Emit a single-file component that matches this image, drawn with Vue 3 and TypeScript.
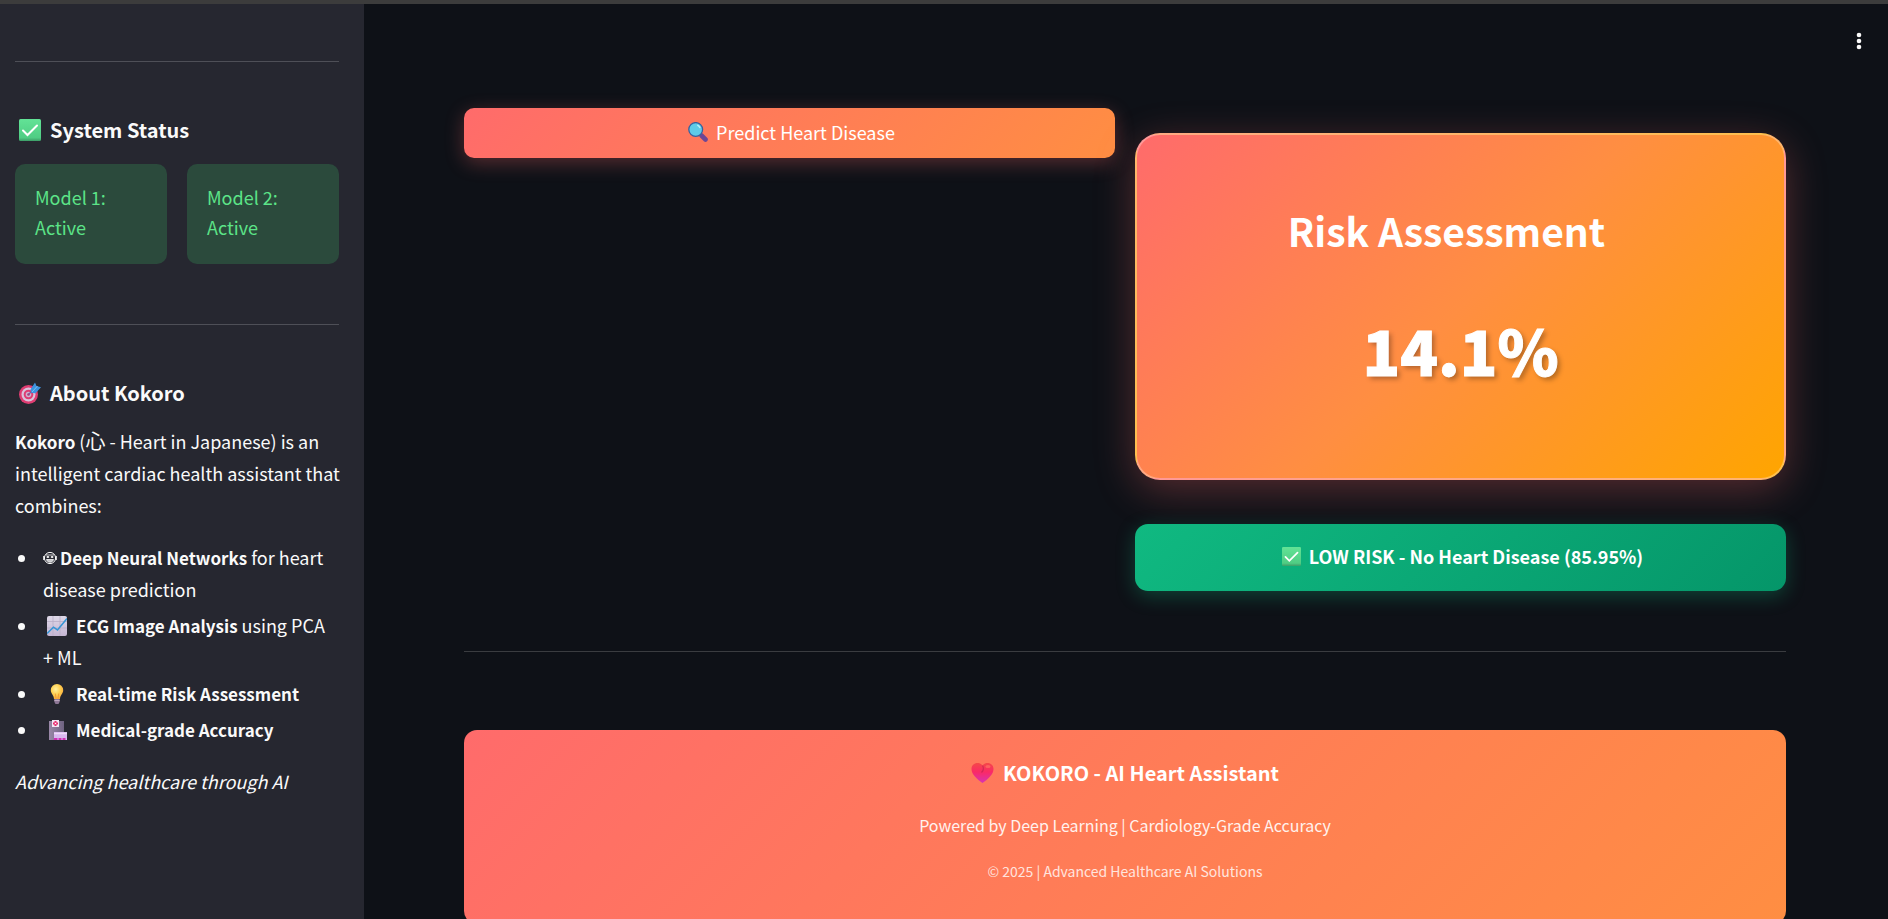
<script setup lang="ts">
const models: string[] = ['Model 1: Active', 'Model 2: Active']
const riskPercent = '14.1%'
const verdict = 'LOW RISK - No Heart Disease (85.95%)'
</script>

<template>
  <div class="shell">
    <svg class="defs" width="0" height="0" aria-hidden="true">
      <defs>
        <linearGradient id="gTick" x1="0" y1="0" x2="0" y2="1">
          <stop offset="0" stop-color="#62e396" /><stop offset=".85" stop-color="#50cd84" /><stop offset="1" stop-color="#3d9c67" />
        </linearGradient>
        <linearGradient id="gPaper" x1="0" y1="0" x2="0" y2="1">
          <stop offset="0" stop-color="#ded8e8" /><stop offset="1" stop-color="#c5b6d3" />
        </linearGradient>
        <radialGradient id="gBulb" cx=".4" cy=".35" r=".7">
          <stop offset="0" stop-color="#fff0a0" /><stop offset=".5" stop-color="#ffd152" /><stop offset="1" stop-color="#f7a83b" />
        </radialGradient>
        <linearGradient id="gHeart" x1="0" y1="0" x2="0" y2="1">
          <stop offset="0" stop-color="#f54848" /><stop offset=".45" stop-color="#fa2a66" /><stop offset="1" stop-color="#d832b4" />
        </linearGradient>
        <linearGradient id="gTower" x1="0" y1="0" x2="1" y2="0">
          <stop offset="0" stop-color="#9a88a8" /><stop offset="1" stop-color="#6e6280" />
        </linearGradient>
        <symbol id="tick" viewBox="0 0 22 22">
          <rect width="22" height="22" rx="1.5" fill="url(#gTick)" />
          <path d="M4 11.5 8.5 16 18 6.5" fill="none" stroke="#fff" stroke-width="2" stroke-linecap="round" />
        </symbol>
        <symbol id="target" viewBox="0 0 22 22">
          <circle cx="9.500" cy="12.500" r="9.500" fill="#df3d72" />
          <circle cx="9.500" cy="12.500" r="7" fill="#d9c4dc" />
          <circle cx="9.500" cy="12.500" r="4.800" fill="#df3d72" />
          <circle cx="9.500" cy="12.500" r="2.800" fill="#cdb4d2" />
          <circle cx="9.500" cy="12.500" r="1.300" fill="#b33a70" />
          <path d="M9.500 12.500 16 6" stroke="#7c5ba0" stroke-width="1.200" />
          <path d="m11.500 7.500 4.500-7 1.500 3.500 4.500 1.200-5.500 6-4-.2z" fill="#3b93e0" />
          <path d="M13 10 18.500 4" stroke="#7cc0f4" stroke-width="1" />
        </symbol>
        <symbol id="chart" viewBox="0 0 20 20">
          <rect width="20" height="20" rx="2" fill="url(#gPaper)" />
          <path d="M0 5.500h20M0 12h20M6 0v20M13 0v20" stroke="#b9aec8" stroke-width=".8" />
          <path d="m0 17.500 6.500-6.300 4 2.800L20 2.500" fill="none" stroke="#3595d5" stroke-width="1.600" />
        </symbol>
        <symbol id="bulb" viewBox="0 0 20 20">
          <path d="M10 0a6.200 6.200 0 0 0-6.200 6.200C3.800 9.500 7 11 7 15h6c0-4 3.200-5.500 3.200-8.800A6.200 6.200 0 0 0 10 0z" fill="url(#gBulb)" />
          <path d="M9 14.500 8.300 9.500M11 14.500l.7-5" stroke="#ee8b2c" stroke-width=".7" />
          <path d="M7.300 15h5.400v2.800L11.500 20h-3l-1.200-2.200z" fill="#8d7795" />
          <path d="M7.300 16.500h5.400" stroke="#c6b3cc" stroke-width=".8" />
        </symbol>
        <symbol id="hospital" viewBox="0 0 20 20">
          <rect x="2" y="1" width="15" height="19" fill="url(#gTower)" />
          <rect x="5" y="0" width="7" height="7" fill="#f3e5f4" />
          <path d="M8.500 1v5M6 3.500h5" stroke="#e8286c" stroke-width="2" />
          <circle cx="8.500" cy="3.500" r=".8" fill="#fff" />
          <rect x="7" y="12" width="13" height="8" fill="#d9b8f0" />
          <path d="M7 13.500h13" stroke="#eddbf8" stroke-width="1.500" />
          <path d="M7 19h3.500M11.500 19h3M15.500 19h3" stroke="#cf2fb4" stroke-width="2" />
        </symbol>
        <symbol id="face" viewBox="0 0 14 14">
          <circle cx="7" cy="7" r="5.600" fill="none" stroke="#fafafa" stroke-width="1" />
          <path d="M.8 5v4M13.200 5v4" stroke="#fafafa" stroke-width="1.200" />
          <path d="M3 4h8" stroke="#fafafa" stroke-width=".8" />
          <ellipse cx="4.900" cy="6" rx="1.400" ry="1" fill="#fafafa" />
          <ellipse cx="9.100" cy="6" rx="1.400" ry="1" fill="#fafafa" />
          <path d="M3.500 8.500h7c-.4 1.800-1.700 2.700-3.500 2.700s-3.100-.9-3.500-2.700z" fill="#c8c8cc" stroke="#fafafa" stroke-width=".8" />
        </symbol>
        <symbol id="lens" viewBox="0 0 20 20">
          <path d="m13.500 13.500 4 4" stroke="#6f4694" stroke-width="4.600" stroke-linecap="round" />
          <circle cx="7.700" cy="7.500" r="6.900" fill="#5fcbe8" stroke="#3a5f9c" stroke-width="1.300" />
          <path d="M9.800 3.300a4.500 4.500 0 0 1 2 2.200" stroke="#b9f0fa" stroke-width="1.500" fill="none" stroke-linecap="round" />
        </symbol>
        <symbol id="heart" viewBox="0 0 22 20">
          <path d="M11 2.500C9.500.5 7.500 0 6 0 2.500 0 0 2.500 0 6c0 5.500 5.500 10 11 14 5.500-4 11-8.500 11-14 0-3.500-2.500-6-6-6-1.500 0-3.500.5-5 2.500z" fill="url(#gHeart)" />
          <path d="M11 2.500c1.500 2.500 1 5-1 7" fill="none" stroke="#b81f50" stroke-width="1.200" opacity=".6" />
          <ellipse cx="16.500" cy="3.500" rx="2.600" ry="1.600" fill="#ff6a62" opacity=".8" />
        </symbol>
      </defs>
    </svg>

    <aside class="sidebar">
      <hr class="rule" />
      <h3 class="side-title"><svg class="ico"><use href="#tick" /></svg>System Status</h3>
      <div class="models">
        <div v-for="m in models" :key="m" class="model">{{ m }}</div>
      </div>
      <hr class="rule" />
      <h3 class="side-title"><svg class="ico"><use href="#target" /></svg>About Kokoro</h3>
      <p class="text"><strong>Kokoro</strong> (<span class="kanji">心</span> - Heart in Japanese) is an intelligent cardiac health assistant that combines:</p>
      <ul class="list">
        <li><svg class="mini face"><use href="#face" /></svg><strong>Deep Neural Networks</strong> for heart disease prediction</li>
        <li><svg class="mini"><use href="#chart" /></svg><strong>ECG Image Analysis</strong> using PCA + ML</li>
        <li><svg class="mini"><use href="#bulb" /></svg><strong>Real-time Risk Assessment</strong></li>
        <li><svg class="mini"><use href="#hospital" /></svg><strong>Medical-grade Accuracy</strong></li>
      </ul>
      <p class="text"><em>Advancing healthcare through AI</em></p>
    </aside>

    <main class="main">
      <button class="menu" type="button" aria-label="Main menu">
        <svg width="6" height="18" viewBox="0 0 6 18" fill="#fafafa"><circle cx="3" cy="3" r="2.300" /><circle cx="3" cy="9" r="2.300" /><circle cx="3" cy="15" r="2.300" /></svg>
      </button>
      <div class="columns">
        <button class="predict" type="button"><svg class="lens"><use href="#lens" /></svg>Predict Heart Disease</button>
        <div class="results">
          <section class="risk">
            <h2 class="risk-title">Risk Assessment</h2>
            <div class="risk-value">{{ riskPercent }}</div>
          </section>
          <div class="verdict"><svg class="mini-tick"><use href="#tick" /></svg>{{ verdict }}</div>
        </div>
      </div>
      <hr class="rule main-rule" />
      <footer class="footer">
        <h3 class="footer-title"><svg class="heart"><use href="#heart" /></svg>KOKORO - AI Heart Assistant</h3>
        <p class="powered">Powered by Deep Learning | Cardiology-Grade Accuracy</p>
        <p class="copy">© 2025 | Advanced Healthcare AI Solutions</p>
      </footer>
    </main>
  </div>
</template>

<style>
body {
  margin: 0;
  background: #0e1117;
}
</style>

<style scoped>
* {
  box-sizing: border-box;
}
.shell {
  display: flex;
  height: 100vh;
  overflow: hidden;
  border-top: 4px solid #3c3c3c;
  background: #0e1117;
  color: #fafafa;
  font-family: "Noto Sans CJK JP", "Noto Sans", sans-serif;
  font-size: 18px;
  line-height: 32px;
}
.defs {
  position: absolute;
}
h2, h3, p, ul {
  margin: 0;
}
.sidebar {
  flex: none;
  width: 364px;
  padding: 57px 25px 0 15px;
  background: #262730;
}
.rule {
  height: 1px;
  margin: 0;
  border: 0;
  background: #4e4f57;
}
.side-title {
  display: flex;
  align-items: center;
  gap: 9px;
  margin-top: 52px;
  padding-left: 4px;
  font-size: 20px;
  font-weight: 700;
  line-height: 32px;
}
.ico {
  width: 22px;
  height: 22px;
}
.models {
  display: grid;
  grid-template-columns: 1fr 1fr;
  gap: 20px;
  margin: 18px 0 60px;
}
.model {
  padding: 18px 40px 22px 20px;
  border-radius: 10px;
  background: #2b4a3c;
  color: #5ce488;
  line-height: 30px;
}
.text {
  margin: 16px -12px 0 0;
}
.sidebar strong {
  font-size: 17px;
  line-height: 20px;
}
.kanji {
  font-size: 20px;
  line-height: 20px;
}
.list {
  margin-top: 20px;
  padding: 0 8px 0 28px;
  list-style: none;
}
.list li {
  margin-bottom: 4px;
}
.list li::before {
  content: "";
  display: inline-block;
  width: 7px;
  height: 7px;
  margin: 0 18px 0 -25px;
  border-radius: 50%;
  background: #fafafa;
  vertical-align: 3px;
}
.list + .text {
  margin-top: 20px;
}
.mini {
  width: 20px;
  height: 20px;
  margin: 0 9px 0 4px;
  vertical-align: -3px;
}
.face {
  width: 14px;
  height: 14px;
  margin: 0 3px 0 0;
  vertical-align: 0;
}
.main {
  position: relative;
  flex: 1;
  min-width: 0;
  padding: 104px 102px 0 100px;
}
.menu {
  position: absolute;
  top: 28px;
  right: 26px;
  display: flex;
  padding: 0;
  border: 0;
  background: none;
}
.columns {
  display: grid;
  grid-template-columns: 1fr 1fr;
  align-items: start;
  gap: 20px;
}
.predict {
  display: flex;
  align-items: center;
  justify-content: center;
  gap: 8px;
  height: 50px;
  padding: 0 0 2px 4px;
  border: 0;
  border-radius: 10px;
  background: linear-gradient(135deg, #ff6b6b, #ff8e42);
  box-shadow: 0 5px 19px rgba(255, 107, 107, 0.3);
  color: #fff;
  font: inherit;
}
.lens {
  width: 20px;
  height: 20px;
}
.results {
  padding-top: 25px;
}
.risk {
  height: 347px;
  padding-top: 59px;
  border: 2px solid rgba(255, 255, 255, 0.3);
  border-radius: 25px;
  background: linear-gradient(135deg, #ff6b6b 0%, #ff8e42 50%, #ffa500 100%);
  box-shadow: 0 10px 40px rgba(255, 107, 107, 0.3);
  color: #fff;
  text-align: center;
}
.risk-title {
  padding-right: 28px;
  font-size: 39px;
  font-weight: 700;
  line-height: 72px;
}
.risk-value {
  margin-top: 33px;
  font-size: 62px;
  font-weight: 900;
  line-height: 100px;
  text-shadow: 3px 3px 5px rgba(0, 0, 0, 0.3);
  -webkit-text-stroke: 1px #fff;
}
.verdict {
  display: flex;
  align-items: center;
  justify-content: center;
  gap: 8px;
  height: 67px;
  margin-top: 44px;
  padding: 0 0 3px 4px;
  border-radius: 13px;
  background: linear-gradient(135deg, #10b981, #059669);
  box-shadow: 0 5px 19px rgba(16, 185, 129, 0.3);
  color: #fff;
  font-weight: 700;
}
.mini-tick {
  width: 19px;
  height: 19px;
}
.main-rule {
  margin-top: 60px;
  background: #3a3c40;
}
.footer {
  height: 194px;
  margin-top: 78px;
  padding-top: 27px;
  border-radius: 13px;
  background: linear-gradient(135deg, #ff6b6b, #ff8e42);
  color: #fff;
  text-align: center;
}
.footer-title {
  display: flex;
  align-items: center;
  justify-content: center;
  gap: 9px;
  font-size: 20px;
  font-weight: 700;
}
.heart {
  width: 23px;
  height: 20px;
}
.powered {
  margin-top: 20px;
  font-size: 16px;
  opacity: 0.9;
}
.copy {
  margin-top: 14px;
  font-size: 14px;
  opacity: 0.8;
}
</style>
